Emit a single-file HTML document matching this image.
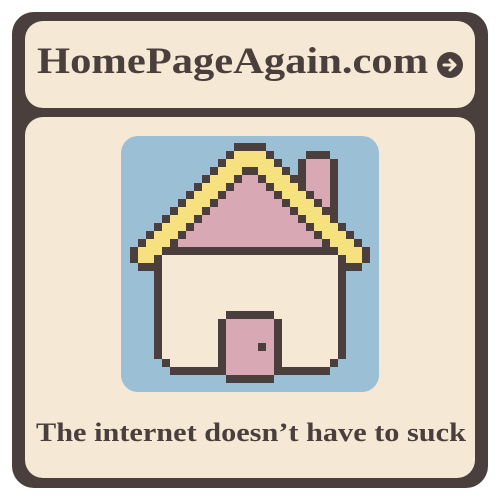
<!DOCTYPE html>
<html><head><meta charset="utf-8"><style>
html,body{margin:0;padding:0;background:#fff;width:500px;height:500px;overflow:hidden}
.frame{position:absolute;left:12px;top:12px;width:476px;height:476px;background:#4a3f3c;border-radius:22px}
.hdr{position:absolute;left:25px;top:21px;width:450px;height:87px;background:#f5e8d4;border-radius:18px}
.main{position:absolute;left:25px;top:117px;width:450px;height:361px;background:#f5e8d4;border-radius:18px}
.t1{position:absolute;left:37px;top:40px;font:bold 37px "Liberation Serif",serif;color:#4a3f3c;white-space:nowrap;transform:scaleX(1.15);transform-origin:0 0}
.arrow{position:absolute;left:437px;top:52px;width:26px;height:26px;border-radius:50%;background:#4a3f3c}
.t2{position:absolute;left:36px;top:418px;font:bold 26px "Liberation Serif",serif;color:#4a3f3c;white-space:nowrap;transform:scaleX(1.165);transform-origin:0 0}
.sky{position:absolute;left:121px;top:136px;width:258px;height:256px;background:#9bbfd4;border-radius:17px}
svg.h{position:absolute;left:122px;top:135px}
</style></head><body>
<div class="frame"></div>
<div class="hdr"></div>
<div class="main"></div>
<div class="t1">HomePageAgain.com</div>
<div class="arrow"><svg width="26" height="26" viewBox="0 0 26 26"><path d="M7 13h11M13 8l5 5-5 5" stroke="#f5e8d4" stroke-width="3" fill="none" stroke-linecap="round" stroke-linejoin="round"/></svg></div>
<div class="sky"></div>
<svg class="h" width="256" height="256" viewBox="0 0 32 32" shape-rendering="crispEdges">
<g fill="#f7e07e">
<rect x="14" y="2" width="4" height="1"/><rect x="13" y="3" width="6" height="1"/><rect x="12" y="4" width="8" height="1"/><rect x="11" y="5" width="10" height="1"/><rect x="10" y="6" width="12" height="1"/><rect x="9" y="7" width="14" height="1"/><rect x="8" y="8" width="16" height="1"/><rect x="7" y="9" width="18" height="1"/><rect x="6" y="10" width="20" height="1"/><rect x="5" y="11" width="22" height="1"/><rect x="4" y="12" width="24" height="1"/><rect x="3" y="13" width="26" height="1"/><rect x="2" y="14" width="28" height="1"/><rect x="2" y="15" width="2" height="1"/><rect x="28" y="15" width="2" height="1"/>
</g>
<g fill="#d8a8b4">
<rect x="15" y="5" width="2" height="1"/><rect x="14" y="6" width="4" height="1"/><rect x="13" y="7" width="6" height="1"/><rect x="12" y="8" width="8" height="1"/><rect x="11" y="9" width="10" height="1"/><rect x="10" y="10" width="12" height="1"/><rect x="9" y="11" width="14" height="1"/><rect x="8" y="12" width="16" height="1"/><rect x="7" y="13" width="18" height="1"/>
<rect x="23" y="3" width="3" height="4"/><rect x="24" y="7" width="2" height="1"/><rect x="25" y="8" width="1" height="1"/>
</g>
<g fill="#f5e8d4">
<rect x="5" y="15" width="22" height="13"/><rect x="6" y="28" width="6" height="1"/><rect x="20" y="28" width="6" height="1"/>
</g>
<rect x="13" y="23" width="6" height="7" fill="#d8a8b4"/>
<g fill="#4a3f3c">
<rect x="14" y="1" width="4" height="1"/>
<path d="M13 2h1v1h-1zM12 3h1v1h-1zM11 4h1v1h-1zM10 5h1v1h-1zM9 6h1v1h-1zM8 7h1v1h-1zM7 8h1v1h-1zM6 9h1v1h-1zM5 10h1v1h-1zM4 11h1v1h-1zM3 12h1v1h-1zM2 13h1v1h-1zM1 14h1v2h-1z"/>
<path d="M18 2h1v1h-1zM19 3h1v1h-1zM20 4h1v1h-1zM21 5h1v1h-1zM22 6h1v1h-1zM23 7h1v1h-1zM24 8h1v1h-1zM25 9h1v1h-1zM26 10h1v1h-1zM27 11h1v1h-1zM28 12h1v1h-1zM29 13h1v1h-1zM30 14h1v2h-1z"/>
<rect x="15" y="4" width="2" height="1"/>
<path d="M14 5h1v1h-1zM13 6h1v1h-1zM12 7h1v1h-1zM11 8h1v1h-1zM10 9h1v1h-1zM9 10h1v1h-1zM8 11h1v1h-1zM7 12h1v1h-1zM6 13h1v1h-1z"/>
<path d="M17 5h1v1h-1zM18 6h1v1h-1zM19 7h1v1h-1zM20 8h1v1h-1zM21 9h1v1h-1zM22 10h1v1h-1zM23 11h1v1h-1zM24 12h1v1h-1zM25 13h1v1h-1z"/>
<rect x="5" y="14" width="22" height="1"/>
<rect x="23" y="2" width="3" height="1"/><rect x="22" y="3" width="1" height="4"/><rect x="26" y="3" width="1" height="7"/>
<rect x="2" y="16" width="2" height="1"/><rect x="28" y="16" width="2" height="1"/>
<rect x="4" y="15" width="1" height="13"/><rect x="27" y="15" width="1" height="13"/>
<rect x="5" y="28" width="1" height="1"/><rect x="26" y="28" width="1" height="1"/>
<rect x="6" y="29" width="6" height="1"/><rect x="20" y="29" width="6" height="1"/>
<rect x="13" y="22" width="6" height="1"/><rect x="12" y="23" width="1" height="7"/><rect x="19" y="23" width="1" height="7"/>
<rect x="13" y="30" width="6" height="1"/><rect x="17" y="26" width="1" height="1"/>
</g>
</svg>
<div class="t2">The internet doesn’t have to suck</div>
</body></html>
